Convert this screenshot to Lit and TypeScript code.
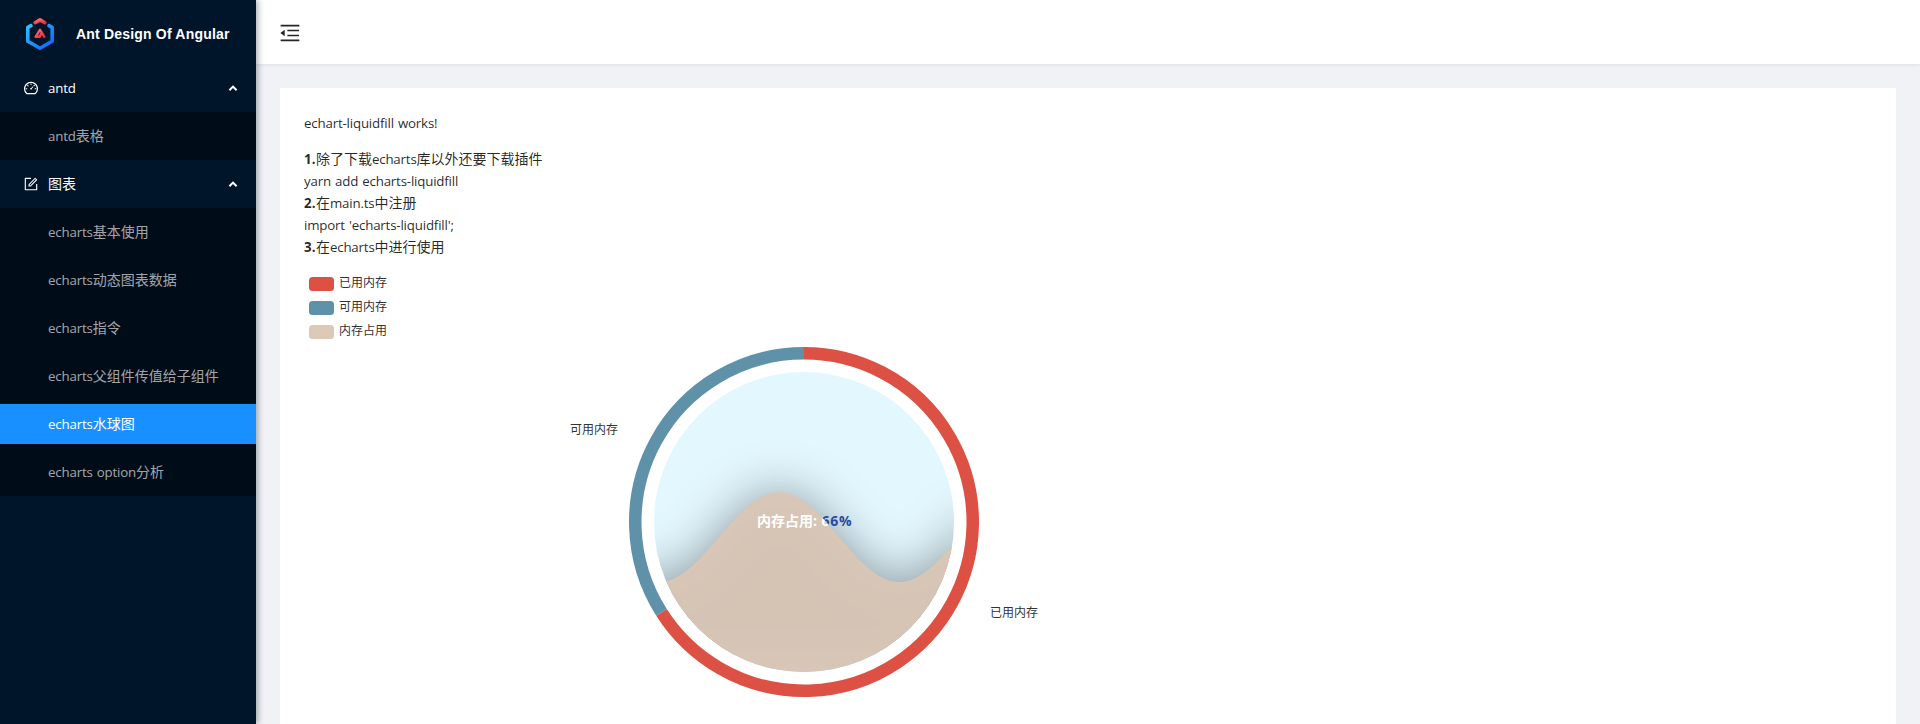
import { LitElement, html, svg, css } from "lit";
import { customElement, property } from "lit/decorators.js";

const ICONS = {
  dashboard: ["M924.8 385.6a446.7 446.7 0 0 0-96-142.4 446.7 446.7 0 0 0-142.4-96C631.1 123.8 572.5 112 512 112s-119.1 11.8-174.4 35.2a446.7 446.7 0 0 0-142.4 96 446.7 446.7 0 0 0-96 142.4C75.8 440.9 64 499.5 64 560c0 132.7 58.3 257.7 159.9 343.1l1.7 1.4c5.8 4.8 13.1 7.5 20.6 7.5h531.7c7.5 0 14.8-2.7 20.6-7.5l1.7-1.4C901.7 817.7 960 692.7 960 560c0-60.5-11.9-119.1-35.2-174.4zM761.4 836H262.6A371.12 371.12 0 0 1 140 560c0-99.4 38.7-192.8 109-263 70.3-70.3 163.7-109 263-109 99.4 0 192.8 38.7 263 109 70.3 70.3 109 163.7 109 263 0 105.6-44.5 205.5-122.6 276zM623.5 421.5a8.03 8.03 0 0 0-11.3 0L527.7 506c-18.7-5-39.4-.2-54.1 14.5a55.95 55.95 0 0 0 0 79.2 55.95 55.95 0 0 0 79.2 0 55.87 55.87 0 0 0 14.5-54.1l84.5-84.5c3.1-3.1 3.1-8.2 0-11.3l-28.3-28.3zM490 320h44c4.4 0 8-3.6 8-8v-80c0-4.4-3.6-8-8-8h-44c-4.4 0-8 3.6-8 8v80c0 4.4 3.6 8 8 8zm260 218v44c0 4.4 3.6 8 8 8h80c4.4 0 8-3.6 8-8v-44c0-4.4-3.6-8-8-8h-80c-4.4 0-8 3.6-8 8zm12.7-197.2l-31.1-31.1a8.03 8.03 0 0 0-11.3 0l-56.6 56.6a8.03 8.03 0 0 0 0 11.3l31.1 31.1c3.1 3.1 8.2 3.1 11.3 0l56.6-56.6c3.1-3.1 3.1-8.2 0-11.3zm-458.6-31.1a8.03 8.03 0 0 0-11.3 0l-31.1 31.1a8.03 8.03 0 0 0 0 11.3l56.6 56.6c3.1 3.1 8.2 3.1 11.3 0l31.1-31.1c3.1-3.1 3.1-8.2 0-11.3l-56.6-56.6zM262 530h-80c-4.4 0-8 3.6-8 8v44c0 4.4 3.6 8 8 8h80c4.4 0 8-3.6 8-8v-44c0-4.4-3.6-8-8-8z"],
  form: [
    "M904 512h-56c-4.4 0-8 3.6-8 8v320H184V184h320c4.4 0 8-3.6 8-8v-56c0-4.4-3.6-8-8-8H144c-17.7 0-32 14.3-32 32v736c0 17.7 14.3 32 32 32h736c17.7 0 32-14.3 32-32V520c0-4.4-3.6-8-8-8z",
    "M355.9 534.9L354 653.8c-.1 8.9 7.1 16.2 16 16.2h.4l118-2.9c2-.1 4-.9 5.4-2.3l415.9-415c3.1-3.1 3.1-8.2 0-11.3L785.4 114.3c-1.6-1.6-3.6-2.3-5.7-2.3s-4.1.8-5.7 2.3l-415.8 415a8.3 8.3 0 0 0-2.3 5.6zm63.5 23.6L779.7 199l45.2 45.1-360.5 359.7-45.7 1.1.7-46.4z",
  ],
  fold: ["M408 442h480c4.4 0 8-3.6 8-8v-56c0-4.4-3.6-8-8-8H408c-4.4 0-8 3.6-8 8v56c0 4.4 3.6 8 8 8zm-8 204c0 4.4 3.6 8 8 8h480c4.4 0 8-3.6 8-8v-56c0-4.4-3.6-8-8-8H408c-4.4 0-8 3.6-8 8v56zm504-486H120c-4.4 0-8 3.6-8 8v56c0 4.4 3.6 8 8 8h784c4.4 0 8-3.6 8-8v-56c0-4.4-3.6-8-8-8zm0 632H120c-4.4 0-8 3.6-8 8v56c0 4.4 3.6 8 8 8h784c4.4 0 8-3.6 8-8v-56c0-4.4-3.6-8-8-8zM115.4 518.9L271.7 642c5.8 4.6 14.4.5 14.4-6.9V388.9c0-7.4-8.5-11.5-14.4-6.9L115.4 505.1a8.74 8.74 0 0 0 0 13.8z"],
};

const icon = (name: keyof typeof ICONS, cls: string) => html`
  <svg class=${cls} viewBox="0 0 1024 1024" fill="currentColor">${ICONS[name].map((d) => svg`<path d=${d}></path>`)}</svg>`;

/* Wraps the Latin runs of a mixed string so that they can be sized on their own. */
const mixed = (text: string) =>
  (text.match(/[\x20-\x7e]+|[^\x20-\x7e]+/g) ?? []).map((run) =>
    /^[\x20-\x7e]/.test(run) ? html`<span class="latin">${run}</span>` : run
  );

const latin = css`
  .latin { font-size: 13.3px; letter-spacing: -0.18px; word-spacing: 0.8px; }
  b .latin { letter-spacing: 0.25px; }
`;

const MENU = [
  { title: "antd", icon: "dashboard" as const, items: ["antd表格"] },
  {
    title: "图表",
    icon: "form" as const,
    items: ["echarts基本使用", "echarts动态图表数据", "echarts指令", "echarts父组件传值给子组件", "echarts水球图", "echarts option分析"],
  },
];

@customElement("side-menu")
export class SideMenu extends LitElement {
  @property() active = "";

  static styles = [latin, css`
    :host { display: block; width: 256px; flex: none; background: #001529; color: #fff;
      box-shadow: 2px 0 6px rgba(0, 21, 41, .35); z-index: 2; position: relative; }
    .brand { height: 64px; display: flex; align-items: center; padding-left: 24px; box-sizing: border-box; }
    .logo { width: 32px; height: 34px; margin-top: 4px; }
    .name { margin: 3px 0 0 20px; font: bold 14px/20px "Liberation Sans", Arial, sans-serif; letter-spacing: .19px; white-space: nowrap; }
    .head { display: flex; align-items: center; height: 48px; padding: 0 18px 0 23px; }
    .icon { width: 16px; height: 16px; margin-right: 9px; }
    .title { flex: 1; }
    .arrow { width: 10px; height: 8px; }
    .sub { background: #000c17; }
    .item { height: 40px; line-height: 40px; padding-left: 48px; border: 0 solid #000c17; border-width: 4px 0; color: rgba(255, 255, 255, .65); white-space: nowrap; }
    .item.on { background: #1890ff; color: #fff; }
  `];

  render() {
    return html`
      <div class="brand">
        <svg class="logo" viewBox="24 17 32 34" fill="none" stroke-linecap="round" stroke-linejoin="round">
          <defs>
            <linearGradient id="b" x1="0" y1="0" x2="1" y2="1"><stop offset="0" stop-color="#29c1ff"></stop><stop offset=".45" stop-color="#1e96ff"></stop><stop offset="1" stop-color="#0d62ff"></stop></linearGradient>
            <linearGradient id="r" x1="0" y1="0" x2="1" y2="1"><stop offset="0" stop-color="#ff6e73"></stop><stop offset="1" stop-color="#f5283c"></stop></linearGradient>
          </defs>
          <path d="M31 25.6L27.8 27.4V41.2L40 48.2L52.2 41.2V27.4L49 25.6" stroke="url(#b)" stroke-width="3.6"></path>
          <path d="M35.2 22.7L40 19.9L44.8 22.7" stroke="url(#r)" stroke-width="3.6"></path>
          <path d="M41.2 33.6L39.7 36.8H35.6L40 29.8L44.4 36.8" stroke="url(#r)" stroke-width="2.4"></path>
        </svg>
        <span class="name">Ant Design Of Angular</span>
      </div>
      ${MENU.map((group) => html`
        <div class="head">
          ${icon(group.icon, "icon")}
          <span class="title">${mixed(group.title)}</span>
          <svg class="arrow" viewBox="0 0 10 8" fill="none" stroke="#fff" stroke-width="2"><path d="M1.4 6.2L5 2.6L8.6 6.2"></path></svg>
        </div>
        <div class="sub">${group.items.map((item) => html`<div class="item ${item === this.active ? "on" : ""}">${mixed(item)}</div>`)}</div>
      `)}
    `;
  }
}

/* Ring chart with a liquid gauge in its middle. */
@customElement("liquid-chart")
export class LiquidChart extends LitElement {
  static styles = css`
    :host { display: block; width: 1000px; height: 500px; }
    svg { display: block; }
    text { font-size: 12px; fill: #333; }
    .value { font-size: 14px; font-weight: bold; }
    .dry { fill: #294d99; }
    .wet { fill: #fff; }
  `;

  private legend = [
    { label: "已用内存", color: "#dd5145" },
    { label: "可用内存", color: "#5f91a9" },
    { label: "内存占用", color: "#ddc9b8" },
  ];

  private surface() {
    const points: string[] = [];
    for (let x = 320; x <= 680; x += 2) {
      points.push(`${x} ${(265 - 45 * Math.cos(((x - 475) / 120.2) * Math.PI)).toFixed(2)}`);
    }
    return `M${points.join("L")}`;
  }

  private arc(from: number, to: number) {
    const at = (p: number) => `${500 + 168.75 * Math.sin(p * 2 * Math.PI)} ${250 - 168.75 * Math.cos(p * 2 * Math.PI)}`;
    return `M${at(from)}A168.75 168.75 0 ${to - from > 0.5 ? 1 : 0} 1 ${at(to)}`;
  }

  private value(cls: string) {
    return svg`<text class="value ${cls}" y="254"><tspan x="453">内存占用</tspan><tspan x="509">:</tspan><tspan x="517.6" textLength="30">66%</tspan></text>`;
  }

  render() {
    const surface = this.surface();
    const wave = `${surface}V400H320Z`;
    return html`
      <svg width="1000" height="500" viewBox="0 0 1000 500">
        <defs>
          <clipPath id="ball"><circle cx="500" cy="250" r="150"></circle></clipPath>
          <clipPath id="water"><path d=${wave}></path></clipPath>
          <clipPath id="air"><path d=${`${surface}V100H320Z`}></path></clipPath>
          <filter id="blur" x="-40%" y="-60%" width="180%" height="220%"><feGaussianBlur stdDeviation="25"></feGaussianBlur></filter>
        </defs>
        ${this.legend.map((entry, i) => svg`
          <rect x="5" y=${5 + i * 24} width="25" height="14" rx="3.5" fill=${entry.color}></rect>
          <text x="35" y=${15 + i * 24}>${entry.label}</text>`)}
        <path d=${this.arc(0, 0.66)} fill="none" stroke="#dd5145" stroke-width="12.5"></path>
        <path d=${this.arc(0.66, 1)} fill="none" stroke="#5f91a9" stroke-width="12.5"></path>
        <text x="266" y="162">可用内存</text>
        <text x="686" y="345">已用内存</text>
        <circle cx="500" cy="250" r="150" fill="#e3f7ff"></circle>
        <g clip-path="url(#ball)">
          <path d=${wave} fill="#000" fill-opacity=".38" filter="url(#blur)"></path>
          <path d=${wave} fill="#dac7b6" fill-opacity=".94"></path>
        </g>
        <g clip-path="url(#air)">${this.value("dry")}</g>
        <g clip-path="url(#water)">${this.value("wet")}</g>
      </svg>
    `;
  }
}

@customElement("app-root")
export class AppRoot extends LitElement {
  static styles = [latin, css`
    :host { display: flex; height: 724px; overflow: hidden; background: #f0f2f5; color: rgba(0, 0, 0, .85);
      font: 14px/22px "Open Sans", "Noto Sans CJK SC", sans-serif; }
    .main { flex: 1; min-width: 0; display: flex; flex-direction: column; }
    .bar { height: 64px; flex: none; background: #fff; display: flex; align-items: center; padding-left: 22px; box-sizing: border-box;
      box-shadow: 0 1px 4px rgba(0, 21, 41, .08); }
    .fold { width: 24px; height: 24px; padding-top: 2px; }
    .card { margin: 24px 24px 0; padding: 24px; background: #fff; flex: none; }
    p { margin: 0 0 14px; }
    .steps { margin-bottom: 14px; }
  `];

  render() {
    return html`
      <side-menu active="echarts水球图"></side-menu>
      <div class="main">
        <div class="bar">${icon("fold", "fold")}</div>
        <div class="card">
          <p>${mixed("echart-liquidfill works!")}</p>
          <div class="steps">
            <div><b>${mixed("1.")}</b>${mixed("除了下载echarts库以外还要下载插件")}</div>
            <div>${mixed("yarn add echarts-liquidfill")}</div>
            <div><b>${mixed("2.")}</b>${mixed("在main.ts中注册")}</div>
            <div>${mixed("import 'echarts-liquidfill';")}</div>
            <div><b>${mixed("3.")}</b>${mixed("在echarts中进行使用")}</div>
          </div>
          <liquid-chart></liquid-chart>
        </div>
      </div>
    `;
  }
}
